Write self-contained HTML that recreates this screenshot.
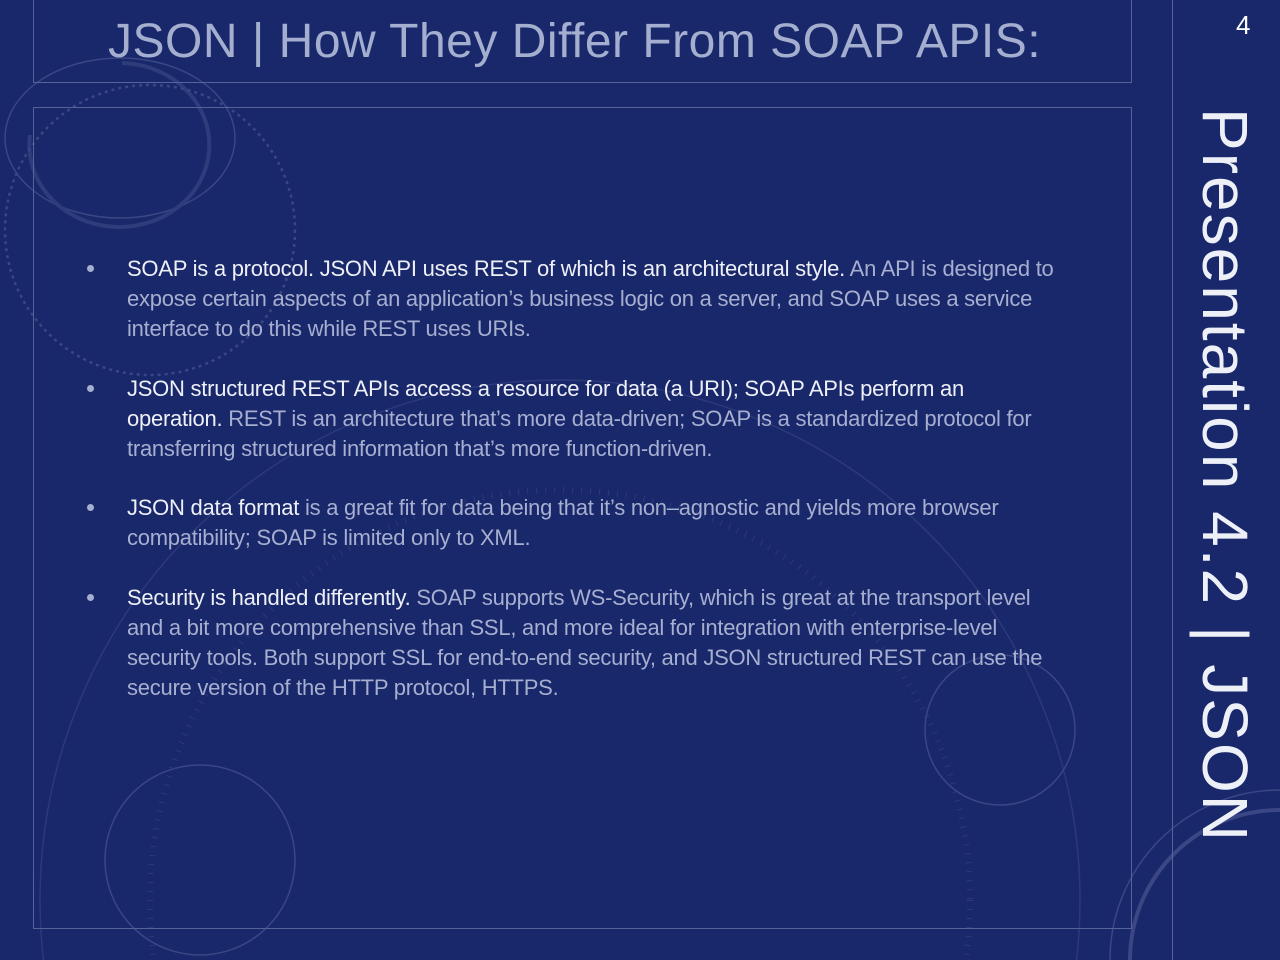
<!DOCTYPE html>
<html><head><meta charset="utf-8"><style>
html,body{margin:0;padding:0;width:1280px;height:960px;overflow:hidden}
body{background:#19276b;font-family:"Liberation Sans",sans-serif}
#w{position:relative;width:1280px;height:960px;overflow:hidden}
.box{position:absolute;border:1px solid #56639a;box-sizing:border-box}
.title{position:absolute;left:108px;top:14px;font-size:48px;color:#a4aecf;white-space:nowrap;letter-spacing:0.5px}
.p{position:absolute;left:127px;font-size:22px;line-height:30px;color:#a6afcf;white-space:nowrap;letter-spacing:-0.25px}
.p b{font-weight:normal;color:#eef0f7}
.dot{position:absolute;left:87px;width:7px;height:7px;border-radius:50%;background:#a6afcf}
.vert{position:absolute;left:1262px;top:108px;transform-origin:0 0;transform:rotate(90deg);font-size:64px;color:#eef0f8;white-space:nowrap;letter-spacing:2px}
</style></head><body><div id="w">
<svg width="1280" height="960" style="position:absolute;left:0;top:0" fill="none">
<g stroke="#3a4784" stroke-width="1.5">
<ellipse cx="120" cy="138" rx="115" ry="80"/>
<path d="M30 135 A90 82 0 1 0 122 63" stroke-width="4" stroke="#2f3c7c"/>
<circle cx="150" cy="230" r="145" stroke-dasharray="3 4" stroke-width="2.5"/>
<circle cx="200" cy="860" r="95"/>
<circle cx="560" cy="900" r="520" stroke="#2c3a7a"/>
<circle cx="560" cy="900" r="410" stroke-dasharray="1 8" stroke-width="6" stroke="#2c3a7a"/>
<circle cx="1000" cy="730" r="75"/>
<circle cx="1280" cy="960" r="170"/>
<circle cx="1280" cy="960" r="150" stroke-width="4"/>
</g></svg>
<div class="box" style="left:33px;top:-1px;width:1099px;height:84px"></div>
<div class="box" style="left:33px;top:107px;width:1099px;height:822px"></div>
<div class="box" style="left:1172px;top:-1px;width:120px;height:962px"></div>
<div class="title">JSON | How They Differ From SOAP APIS:</div>
<div style="position:absolute;left:1236px;top:10px;font-size:26px;color:#fff">4</div>
<div class="vert">Presentation 4.2 | JSON</div>

<div class="dot" style="top:265px"></div>
<div class="p" style="top:254px"><b>SOAP is a protocol. JSON API uses REST of which is an architectural style.</b> An API is designed to<br>expose certain aspects of an application’s business logic on a server, and SOAP uses a service<br>interface to do this while REST uses URIs.</div>
<div class="dot" style="top:385px"></div>
<div class="p" style="top:374px"><b>JSON structured REST APIs access a resource for data (a URI); SOAP APIs perform an<br>operation.</b> REST is an architecture that’s more data-driven; SOAP is a standardized protocol for<br>transferring structured information that’s more function-driven.</div>
<div class="dot" style="top:504px"></div>
<div class="p" style="top:493px"><b>JSON data format</b> is a great fit for data being that it’s non–agnostic and yields more browser<br>compatibility; SOAP is limited only to XML.</div>
<div class="dot" style="top:594px"></div>
<div class="p" style="top:583px"><b>Security is handled differently.</b> SOAP supports WS-Security, which is great at the transport level<br>and a bit more comprehensive than SSL, and more ideal for integration with enterprise-level<br>security tools. Both support SSL for end-to-end security, and JSON structured REST can use the<br>secure version of the HTTP protocol, HTTPS.</div>
</div></body></html>
